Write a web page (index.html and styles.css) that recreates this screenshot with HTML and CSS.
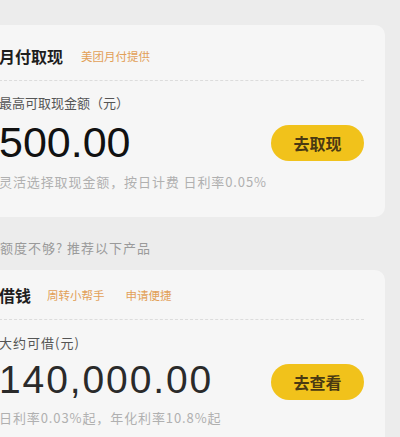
FILE: index.html
```html
<!DOCTYPE html>
<html lang="zh-CN">
<head>
<meta charset="utf-8">
<link rel="stylesheet" href="styles.css">
</head>
<body>
<div class="page">
  <section class="card card-first">
    <div class="card-head head-first">
      <span class="card-title">月付取现</span>
      <span class="tag">美团月付提供</span>
    </div>
    <div class="card-body">
      <div class="label">最高可取现金额（元）</div>
      <div class="amount-row">
        <span class="amount amount-big">500.00</span>
        <button class="btn">去取现</button>
      </div>
      <div class="desc">灵活选择取现金额，按日计费 日利率0.05%</div>
    </div>
  </section>

  <div class="note">额度不够? 推荐以下产品</div>

  <section class="card card-second">
    <div class="card-head head-second">
      <span class="card-title">借钱</span>
      <span class="tag">周转小帮手</span>
      <span class="tag tag-next">申请便捷</span>
    </div>
    <div class="card-body">
      <div class="label label-second">大约可借(元)</div>
      <div class="amount-row row-second">
        <span class="amount amount-mid">140,000.00</span>
        <button class="btn btn-second">去查看</button>
      </div>
      <div class="desc">日利率0.03%起，年化利率10.8%起</div>
    </div>
  </section>
</div>
</body>
</html>
```

FILE: styles.css
```css
* { box-sizing: border-box; }

html, body {
  margin: 0;
  padding: 0;
  background: #ececec;
  font-family: "Noto Sans CJK SC", "Noto Sans", sans-serif;
  color: #222;
  overflow: hidden;
}

.page {
  width: 400px;
  height: 437px;
  padding-top: 25px;
}

.card {
  margin-left: -15px;
  width: 400px;
  background: #f6f6f6;
  border-radius: 10px;
  padding: 0 21px 0 14px;
}

.card-first { padding-bottom: 26px; }
.card-second { padding-bottom: 40px; }

.card-head {
  display: flex;
  align-items: center;
  border-bottom: 1px dashed #dcdcdc;
}

.head-first { height: 56px; padding-top: 6px; gap: 18px; }
.head-second { height: 50px; gap: 16px; }

.tag-next { margin-left: 5px; }

.card-title {
  font-size: 16px;
  font-weight: 700;
  color: #1e1e1e;
  line-height: 24px;
}

.tag {
  font-size: 11.5px;
  line-height: 16px;
  color: #e2a058;
}

.label {
  margin-top: 13px;
  font-size: 13px;
  line-height: 18px;
  color: #555;
}

.label-second {
  margin-top: 14px;
  letter-spacing: 1px;
}

.amount-row {
  display: flex;
  align-items: center;
  justify-content: space-between;
  margin-top: 9px;
}

.row-second { margin-top: 7px; }

.amount {
  font-family: "Liberation Sans", Arial, sans-serif;
  line-height: 1;
}

.amount-big {
  font-size: 43px;
  color: #111;
}

.amount-mid {
  font-size: 39px;
  color: #2a2a2a;
  letter-spacing: 1.9px;
}

.btn {
  width: 93px;
  height: 36px;
  border: 0;
  border-radius: 18px;
  background: #f1c21b;
  color: #4a3a12;
  font-family: "Noto Sans CJK SC", sans-serif;
  font-size: 16px;
  font-weight: 700;
  padding: 0;
}

.btn-second { margin-top: 5px; }

.desc {
  margin-top: 9px;
  font-size: 13px;
  letter-spacing: 0.9px;
  line-height: 18px;
  color: #b0b0b0;
}

.note {
  margin: 22px 0 13px 0;
  font-size: 13px;
  letter-spacing: 1px;
  line-height: 18px;
  color: #9a9a9a;
}
```
